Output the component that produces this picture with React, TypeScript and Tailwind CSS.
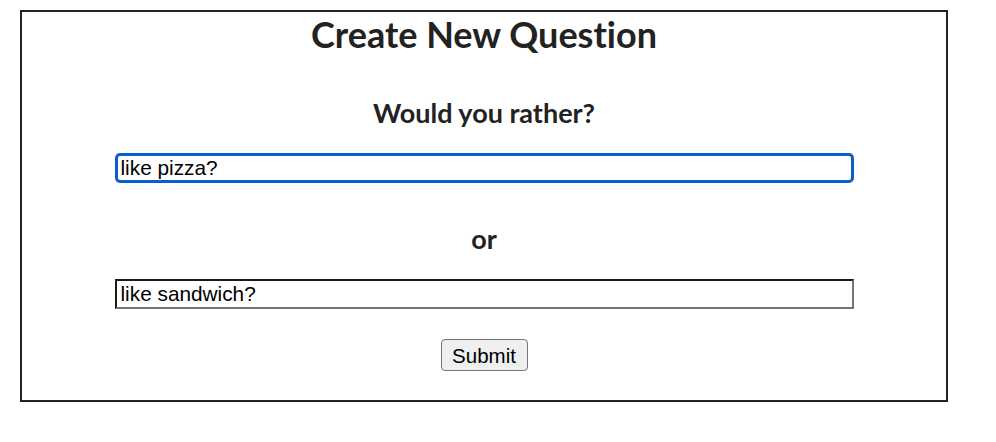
import { useState } from "react";

const App = () => {
  const [optionOne, setOptionOne] = useState("like pizza?");
  const [optionTwo, setOptionTwo] = useState("like sandwich?");

  return (
    <div className="min-h-screen bg-white pt-[10px] pl-[20px]">
      <div className="w-[928px] h-[392px] border-2 border-[#222222] flex flex-col items-center text-[#222222] font-['Lato',sans-serif] [font-variant-ligatures:none]">
        <h1 className="mt-[1px] text-[36px] leading-[43px] font-bold">Create New Question</h1>

        <h3 className="mt-[41px] text-[27px] leading-[32px] font-bold">Would you rather?</h3>

        {/* first option, drawn with its focus ring */}
        <input
          type="text"
          value={optionOne}
          onChange={(e) => setOptionOne(e.target.value)}
          className="mt-[24px] w-[739px] h-[30px] border-[3px] border-[#0a5fcc] rounded-[5px] pl-[3px] bg-white text-black text-[20.8px] leading-[23px] font-['Liberation_Sans',Arial,sans-serif] outline-none"
        />

        <h3 className="mt-[40px] text-[27px] leading-[32px] font-bold">or</h3>

        <input
          type="text"
          value={optionTwo}
          onChange={(e) => setOptionTwo(e.target.value)}
          className="mt-[24px] w-[739px] h-[30px] border-2 border-t-[#1a1a1a] border-l-[#1a1a1a] border-r-[#767676] border-b-[#767676] pl-[4px] bg-white text-black text-[20.8px] leading-[23px] font-['Liberation_Sans',Arial,sans-serif] outline-none"
        />

        <button
          type="submit"
          className="mt-[30px] w-[87px] h-[32px] bg-[#efefef] border border-[#767676] rounded-[4px] text-black text-[20.5px] leading-[23px] font-['Liberation_Sans',Arial,sans-serif]"
        >
          Submit
        </button>
      </div>
    </div>
  );
};

export default App;
